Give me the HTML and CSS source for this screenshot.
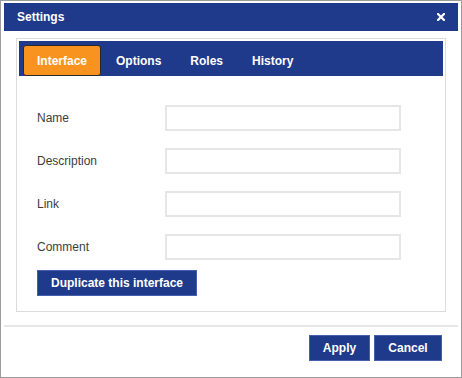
FILE: index.html
```html
<!DOCTYPE html>
<html>
<head>
<meta charset="utf-8">
<link rel="stylesheet" href="styles.css">
</head>
<body>
<div class="dialog">
  <div class="titlebar">
    <span class="title">Settings</span>
    <span class="close"><svg width="8" height="8" viewBox="0 0 8 8"><path d="M1 1L7 7M7 1L1 7" stroke="#fff" stroke-width="2.2" stroke-linecap="square"/></svg></span>
  </div>
  <div class="body">
    <div class="panel">
      <div class="tabs">
        <span class="tab active">Interface</span>
        <span class="tab">Options</span>
        <span class="tab">Roles</span>
        <span class="tab">History</span>
      </div>
      <div class="form">
        <div class="row"><label class="lbl">Name</label><input class="field" type="text"></div>
        <div class="row"><label class="lbl">Description</label><input class="field" type="text"></div>
        <div class="row"><label class="lbl">Link</label><input class="field" type="text"></div>
        <div class="row"><label class="lbl">Comment</label><input class="field" type="text"></div>
        <div class="actions"><button class="btn dup">Duplicate this interface</button></div>
      </div>
    </div>
  </div>
  <div class="footer">
    <button class="btn apply">Apply</button>
    <button class="btn cancel">Cancel</button>
  </div>
</div>
</body>
</html>
```
FILE: styles.css
```css
* { box-sizing: border-box; }
html, body { margin: 0; padding: 0; background: #fff; }
body { font-family: "Liberation Sans", Arial, sans-serif; font-size: 12px; }
.dialog {
  width: 462px;
  height: 378px;
  border: 1px solid #9c9c9c;
  padding: 2px 3px 0 3px;
  display: flex;
  flex-direction: column;
}
.titlebar {
  height: 28px;
  background: #1f3a8b;
  color: #fff;
  display: flex;
  align-items: center;
  justify-content: space-between;
  padding: 0 13px 0 13px;
}
.title { font-weight: bold; font-size: 12px; }
.close { display: flex; align-items: center; width: 8px; height: 8px; }
.body { padding: 7px 12px 13px 12px; }
.panel {
  border: 1px solid #dcdcdc;
  padding: 2px;
}
.tabs {
  height: 35px;
  background: #1f3a8b;
  display: flex;
  align-items: flex-end;
  padding-left: 4px;
  gap: 1px;
}
.tab {
  height: 31px;
  display: flex;
  align-items: center;
  padding: 0 13px;
  border: 1px solid transparent;
  border-radius: 3px;
  color: #fff;
  font-weight: bold;
  font-size: 12px;
}
.tab.active {
  background: #f7931e;
  border-color: #2a2a2a;
}
.form {
  padding: 29px 18px 13px 18px;
  display: flex;
  flex-direction: column;
  gap: 17px;
}
.row {
  display: flex;
  align-items: center;
  height: 26px;
}
.lbl {
  width: 128px;
  color: #3c3c3c;
  font-size: 12px;
}
.field {
  width: 236px;
  height: 26px;
  border: 2px solid #e6e6e6;
  margin: 0;
  padding: 0 4px;
  font: inherit;
  background: #fff;
}
.actions { margin-top: -7px; display: flex; }
.btn {
  height: 26px;
  background: #1f3a8b;
  border: 1px solid #4660ad;
  color: #fff;
  font-family: "Liberation Sans", Arial, sans-serif;
  font-weight: bold;
  font-size: 12px;
  margin: 0;
  padding: 0;
  cursor: pointer;
}
.dup { width: 160px; }
.footer {
  border-top: 2px solid #e6e6e6;
  padding: 8px 16px 0 0;
  display: flex;
  justify-content: flex-end;
  gap: 4px;
}
.apply { width: 61px; }
.cancel { width: 68px; }
```
